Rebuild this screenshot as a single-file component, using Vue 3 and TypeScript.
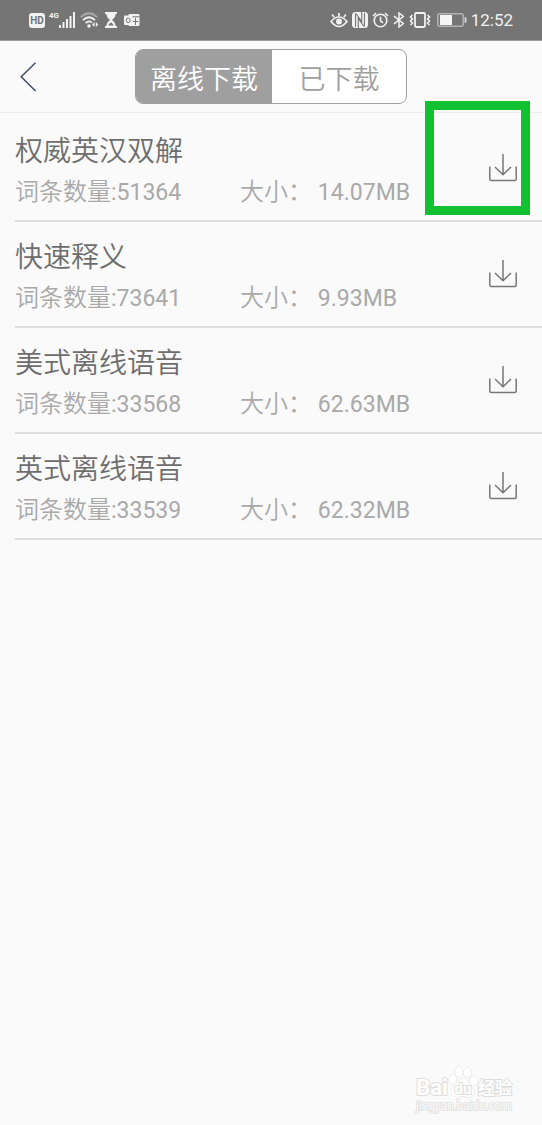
<script setup lang="ts">
import { ref } from 'vue'

interface Pack {
  name: string
  entries: number
  size: string
}

const tabs: string[] = ['离线下载', '已下载']
const activeTab = ref<number>(0)

const packs: Pack[] = [
  { name: '权威英汉双解', entries: 51364, size: '14.07MB' },
  { name: '快速释义', entries: 73641, size: '9.93MB' },
  { name: '美式离线语音', entries: 33568, size: '62.63MB' },
  { name: '英式离线语音', entries: 33539, size: '62.32MB' },
]
const highlighted = ref<number>(0)
</script>

<template>
  <div class="page">
    <div class="status">
      <div class="status-left">
        <span class="hd">HD</span>
        <span class="signal">
          <span class="net">4G</span>
          <svg width="17" height="16" viewBox="0 0 17 16" fill="#f2f2f2">
            <rect x="0" y="13" width="2" height="3" />
            <rect x="3.500" y="10" width="2" height="6" />
            <rect x="7" y="7" width="2" height="9" />
            <rect x="10.500" y="4" width="2" height="12" />
            <rect x="14" y="0" width="2" height="16" />
          </svg>
        </span>
        <svg width="20" height="16" viewBox="0 0 20 16" fill="none" stroke="#f2f2f2" stroke-width="1.8">
          <path d="M.8 5.2Q9 -2.8 17.2 5.2" stroke="#a9a9a9" />
          <path d="M3 8.2Q9 2.4 15 8.2" />
          <path d="M5.6 11.2Q9 7.8 12 10.6" />
          <circle cx="9" cy="14" r="1.8" fill="#f2f2f2" stroke="none" />
          <path d="M14.5 10v5L12 12.500zM15.800 10v5l2.600-2.500z" fill="#f2f2f2" stroke="none" />
        </svg>
        <svg width="14" height="16" viewBox="0 0 14 16" fill="#f2f2f2">
          <path d="M1 0h12v2H1zM1 14h12v2H1z" />
          <path d="M2.500 2h9c0 3-1.500 4.500-3.500 6 2 1.500 3.500 3 3.500 6h-9c0-3 1.500-4.500 3.500-6-2-1.500-3.500-3-3.500-6z" />
          <path d="M4.500 13.500c.3-1.500 1.300-2.200 2.500-2.900 1.200.7 2.200 1.400 2.500 2.900z" fill="#757575" />
        </svg>
        <svg class="mail" width="16" height="15" viewBox="0 0 16 15">
          <rect x="4.500" y="1" width="11" height="12" rx="1" fill="#f2f2f2" />
          <path d="M8 3.800h7.500M11.500 5v7M8.500 8.500h6" stroke="#757575" stroke-width="1" />
          <rect x="0" y="2.500" width="8.500" height="9.500" rx="1" fill="#f2f2f2" />
          <ellipse cx="4.200" cy="7.300" rx="1.900" ry="2.300" fill="none" stroke="#757575" stroke-width="1" />
        </svg>
      </div>
      <div class="status-right">
        <svg width="18" height="16" viewBox="0 0 18 16" fill="none" stroke="#f2f2f2" stroke-width="1.700">
          <path d="M1 9.500Q9 .5 17 9.500Q9 19.500 1 9.500z" />
          <circle cx="9" cy="9.500" r="3" fill="#f2f2f2" stroke="none" />
          <path d="M9 1v3M2.200 2.500l2 2.700M15.800 2.500l-2 2.700" />
        </svg>
        <svg width="16" height="16" viewBox="0 0 16 16">
          <rect x="0" y="0" width="16" height="16" rx="3.500" fill="#f2f2f2" />
          <path d="M3.600 15V1.500M12.400 14.500V1" stroke="#757575" stroke-width="1.100" />
          <path d="M6.300 16V6.500L12 14.500M9.700 0v9.500L4 1.500" fill="none" stroke="#757575" stroke-width="1.100" />
        </svg>
        <svg width="17" height="16" viewBox="0 0 17 16" fill="none" stroke="#f2f2f2" stroke-width="1.600">
          <circle cx="8.500" cy="8.500" r="6.300" />
          <path d="M8.500 4.800v4l2.600 2M1 4L4 1M16 4l-3-3" />
        </svg>
        <svg width="12" height="16" viewBox="0 0 12 16" fill="none" stroke="#f2f2f2" stroke-width="1.500">
          <path d="M1 4.200l9.300 7.300L6 15V1l4.300 3.500L1 11.800" />
        </svg>
        <svg width="22" height="16" viewBox="0 0 22 16" fill="none" stroke="#f2f2f2" stroke-width="1.800">
          <rect x="6" y="1" width="10" height="14" rx="1.200" />
          <path d="M3.500 3L1.500 5l2 2-2 2 2 2-2 2M18.500 3l2 2-2 2 2 2-2 2 2 2" stroke-width="1.600" />
        </svg>
        <svg class="battery" width="30" height="14" viewBox="0 0 30 14">
          <rect x=".8" y=".8" width="25.400" height="12.400" rx="2" fill="none" stroke="#b4b4b4" stroke-width="1.500" />
          <rect x="3" y="2" width="12" height="10" fill="#f5f5f5" />
          <rect x="27.500" y="4" width="2" height="6" rx="1" fill="#d5d5d5" />
        </svg>
        <time>12:52</time>
      </div>
    </div>

    <header class="header">
      <button class="back" type="button" aria-label="返回">
        <svg width="17" height="30" viewBox="0 0 17 30" fill="none" stroke="#424a68" stroke-width="1.500">
          <path d="M15.500 .8L1.200 14.800l14.300 14.200" />
        </svg>
      </button>
      <nav class="tabs">
        <button
          v-for="(tab, i) in tabs"
          :key="tab"
          type="button"
          class="tab"
          :class="{ active: i === activeTab }"
          @click="activeTab = i"
        >{{ tab }}</button>
      </nav>
    </header>

    <ul class="list">
      <li v-for="(pack, i) in packs" :key="pack.name" class="row">
        <div class="info">
          <h2>{{ pack.name }}</h2>
          <p class="meta">
            <span>词条数量<span class="num">:{{ pack.entries }}</span></span>
            <span>大小： <span class="num">{{ pack.size }}</span></span>
          </p>
        </div>
        <button class="download" type="button" :aria-label="'下载' + pack.name">
          <svg width="30" height="30" viewBox="0 0 30 30" fill="none" stroke="#77777a" stroke-width="1.500">
            <path d="M15 1v20.500M7 14l8 7.700 8-7.700" />
            <path d="M1.800 13.500V26q0 1.500 1.500 1.500h23.400q1.500 0 1.500-1.500V13.500" />
          </svg>
        </button>
        <div v-if="i === highlighted" class="highlight"></div>
      </li>
    </ul>

    <div class="watermark">
      <div class="brand">
        <span class="latin">Bai</span>
        <span class="paw">
          <svg width="30" height="33" viewBox="0 0 30 33" fill="#fff" stroke="#dedede">
            <ellipse cx="4.500" cy="13.500" rx="3.600" ry="4.500" />
            <ellipse cx="11" cy="6" rx="3.800" ry="5" />
            <ellipse cx="19.500" cy="6.500" rx="3.800" ry="5" />
            <ellipse cx="25.500" cy="15" rx="3.600" ry="4.500" />
            <path d="M15 13c4.500 0 5 4.500 8 7 5 4 4 11-2.500 11-2.500 0-3-.7-5.500-.7s-3.500.7-6 .7C2.500 31 1.500 24.500 6 20.500c3.500-3 4.500-7.500 9-7.500z" />
          </svg>
          <span class="du">du</span>
        </span>
        <span class="cn">经验</span>
      </div>
      <div class="site">jingyan.baidu.com</div>
    </div>
  </div>
</template>

<style>
body {
  margin: 0;
  background: #fafafa;
}
</style>

<style scoped>
.page {
  position: relative;
  min-height: 100vh;
  background: #fafafa;
  font-family: Roboto, "Noto Sans CJK SC", sans-serif;
  font-weight: 350;
}

svg {
  display: block;
  flex: none;
}

button {
  margin: 0;
  padding: 0;
  border: 0;
  background: none;
  font: inherit;
  color: inherit;
  cursor: pointer;
}

.status {
  display: flex;
  align-items: center;
  justify-content: space-between;
  height: 40px;
  padding: 0 29px;
  border-bottom: 1px solid #a0a0a0;
  background: #757575;
  color: #f2f2f2;
}

.status-left,
.status-right {
  display: flex;
  align-items: center;
  gap: 4px;
}

.hd {
  width: 16px;
  border-radius: 3px;
  background: #f2f2f2;
  color: #757575;
  font-size: 10px;
  font-weight: 700;
  line-height: 15px;
  text-align: center;
}

.signal {
  display: flex;
  align-items: flex-start;
}

.net {
  font-size: 8px;
  font-weight: 700;
  line-height: 8px;
}

.mail,
.battery {
  margin-left: 2px;
}

time {
  font-size: 17px;
  font-weight: 400;
  line-height: 20px;
}

.header {
  display: grid;
  grid-template-columns: 1fr 272px 1fr;
  align-items: center;
  height: 72px;
  box-sizing: border-box;
  padding-bottom: 1px;
}

.header::after {
  content: "";
  grid-column: 1 / -1;
  align-self: end;
  height: 1px;
  background: #ececec;
}

.back {
  justify-self: start;
  margin-left: 20px;
}

.header {
  grid-template-rows: 71px 1px;
  padding-bottom: 0;
}

.tabs {
  display: grid;
  grid-template-columns: 136px 1fr;
  height: 55px;
  box-sizing: border-box;
  border: 1px solid #9f9f9f;
  border-radius: 8px;
  background: #fff;
  overflow: hidden;
}

.tab {
  padding-top: 7px;
  color: #9f9f9f;
  font-size: 27px;
  line-height: 46px;
}

.tab.active {
  background: #9f9f9f;
  color: #fff;
}

.list {
  margin: 0;
  padding: 3px 0 0 15px;
  list-style: none;
}

.row {
  position: relative;
  display: flex;
  align-items: center;
  justify-content: space-between;
  height: 106px;
  box-sizing: border-box;
  padding-right: 24px;
  border-bottom: 2px solid #dedede;
}

.info {
  padding-top: 8px;
}

h2 {
  margin: 0;
  color: #6d6d6d;
  font-size: 28px;
  font-weight: inherit;
  line-height: 40px;
}

.meta {
  display: grid;
  grid-template-columns: 225px auto;
  margin: 0;
  color: #a9a9a9;
  font-size: 24px;
  line-height: 40px;
  white-space: nowrap;
}

.num {
  font-size: 23px;
  font-weight: 400;
}

.highlight {
  position: absolute;
  top: -15px;
  right: 12px;
  width: 105px;
  height: 114px;
  box-sizing: border-box;
  border: 9px solid #12c132;
  pointer-events: none;
}

.watermark {
  position: absolute;
  right: 30px;
  bottom: 12px;
  color: #fff;
}

.brand {
  display: flex;
  align-items: flex-end;
  height: 33px;
  -webkit-text-stroke: 2px #dedede;
  paint-order: stroke fill;
}

.latin {
  font-size: 22px;
  font-weight: 700;
  line-height: 22px;
}

.paw {
  position: relative;
}

.du {
  position: absolute;
  left: 0;
  right: 0;
  bottom: 2px;
  font-size: 15px;
  font-weight: 700;
  line-height: 16px;
  text-align: center;
}

.cn {
  font-size: 17px;
  font-weight: 700;
  line-height: 22px;
}

.site {
  font-size: 12px;
  line-height: 14px;
  -webkit-text-stroke: 2px #e4e4e4;
  paint-order: stroke fill;
}
</style>
